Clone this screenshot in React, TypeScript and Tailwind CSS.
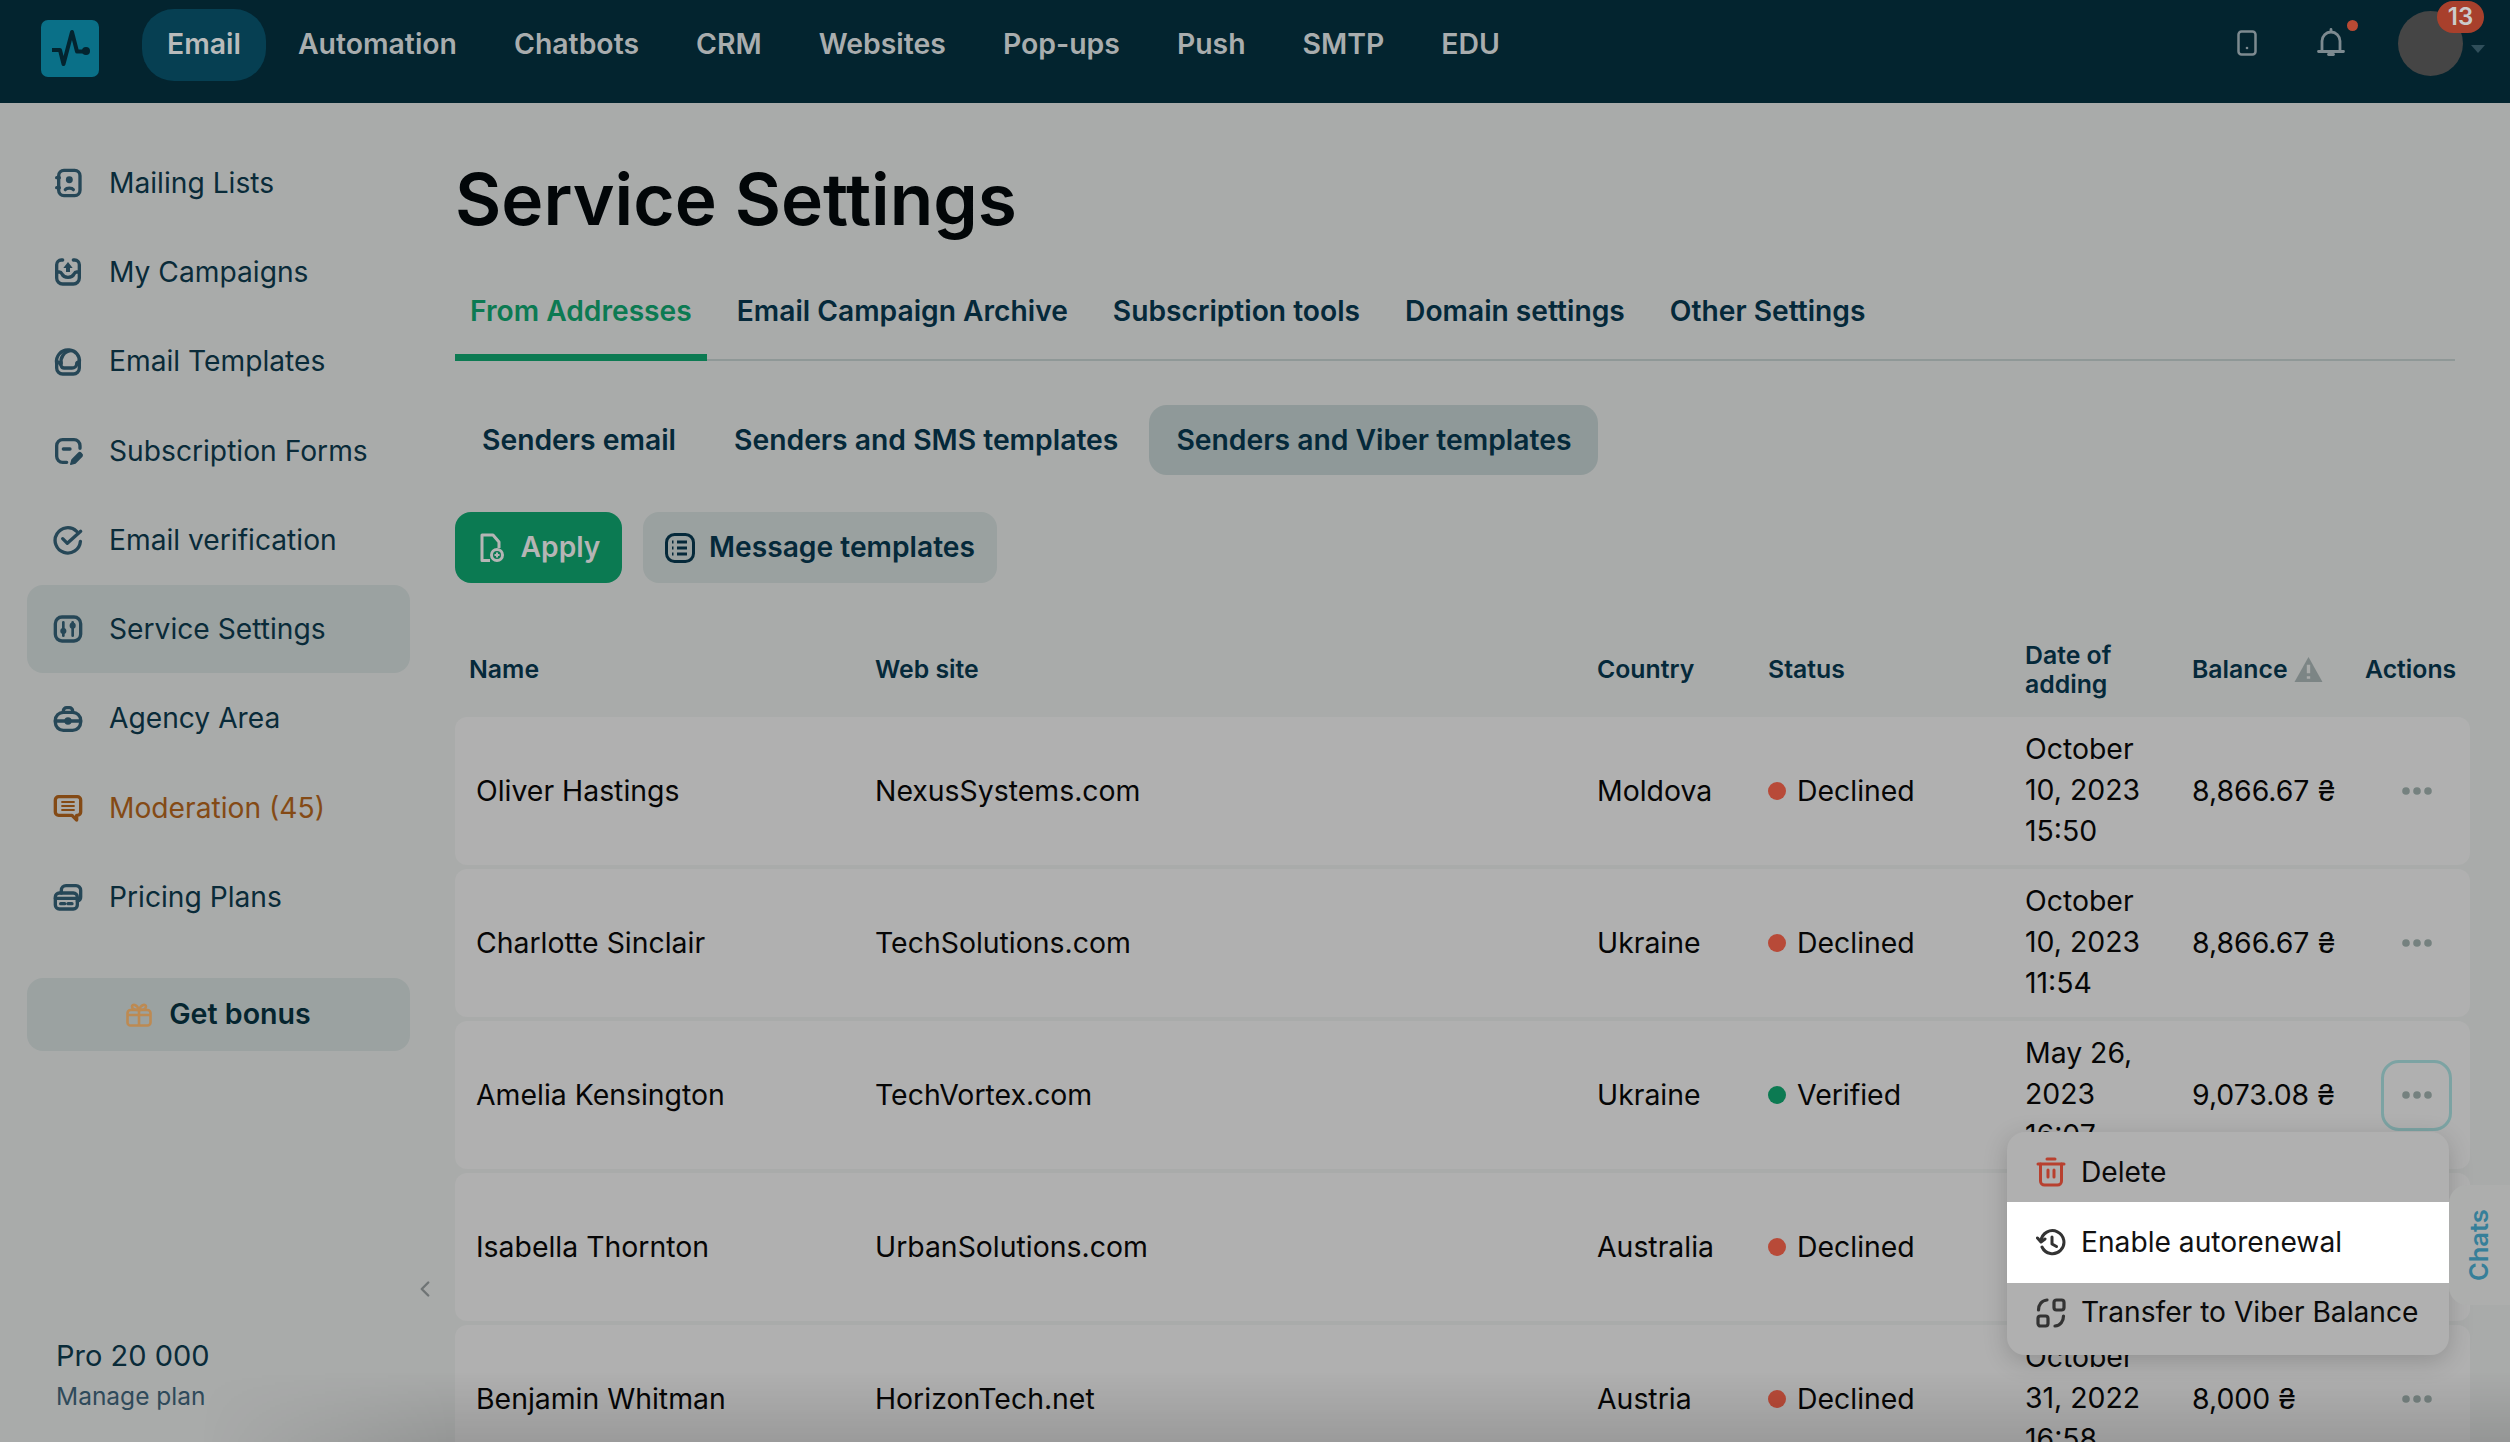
import React from "react";
import { ChevronLeft } from "lucide-react";

const font = { fontFamily: '"Inter", "Noto Sans", sans-serif' };

const navItems = ["Automation", "Chatbots", "CRM", "Websites", "Pop-ups", "Push", "SMTP", "EDU"];

// --- sidebar icons, all on a 24 box ---
const Ico = ({ children }: { children: React.ReactNode }) => (
  <svg viewBox="0 0 24 24" fill="none" stroke="currentColor" strokeWidth="2.5" strokeLinecap="round" strokeLinejoin="round" className="w-[32px] h-[32px]">
    {children}
  </svg>
);

const sideItems: { label: string; icon: React.ReactNode; active?: boolean; warn?: boolean }[] = [
  {
    label: "Mailing Lists",
    icon: (
      <Ico>
        <rect x="5" y="2.5" width="16" height="19" rx="4" />
        <circle cx="13" cy="9.5" r="2.600" fill="currentColor" stroke="none" />
        <path d="M10 17c1-1.500 5-1.500 6 0" />
        <path d="M3.500 8h2M3.500 15.500h2" />
      </Ico>
    ),
  },
  {
    label: "My Campaigns",
    icon: (
      <Ico>
        <path d="M8 3H7a3.500 3.500 0 0 0-3.500 3.500v10A4.500 4.500 0 0 0 8 21h8a4.500 4.500 0 0 0 4.500-4.500v-10A3.500 3.500 0 0 0 17 3h-1" />
        <path d="M3.500 12h2c1 0 1.500.5 2 1.500.7 1.500 2.500 2.500 4.500 2.500s3.800-1 4.500-2.500c.5-1 1-1.500 2-1.500h2" />
        <path d="M12 4.500 15.500 9H13.500v3h-3V9H8.500z" fill="currentColor" stroke="none" />
      </Ico>
    ),
  },
  {
    label: "Email Templates",
    icon: (
      <Ico>
        <path d="M3.500 13A8.500 8.500 0 0 1 12 3h1a8 8 0 0 1 7.500 9v4.500A4.500 4.500 0 0 1 16 21H8a4.500 4.500 0 0 1-4.500-4.500z" />
        <path d="M3.500 12c2 0 3 1 3.500 3 .3 1 1 1.500 2 1.500h6c2 0 3.500-1.500 3.500-3 0-1 1-1.500 2-1.500" />
        <path d="M7 13C6 9 9 4 14 3.500" />
      </Ico>
    ),
  },
  {
    label: "Subscription Forms",
    icon: (
      <Ico>
        <path d="M11 20.500H8A4.500 4.500 0 0 1 3.500 16V8A4.500 4.500 0 0 1 8 3.500h8.500A4.500 4.500 0 0 1 21 8v2" />
        <path d="M8.500 10.500h5" />
        <path d="M14 22l1-3.500 5-5c1-1 3.500 1 2.500 2.500l-5 5z" fill="currentColor" strokeWidth="1" />
      </Ico>
    ),
  },
  {
    label: "Email verification",
    icon: (
      <Ico>
        <path d="M18.500 5.500A9.500 9.500 0 1 0 21.300 13" />
        <path d="M8 11l3.500 3.500L21.500 5.500" />
      </Ico>
    ),
  },
  {
    label: "Service Settings",
    active: true,
    icon: (
      <Ico>
        <rect x="2.500" y="3" width="19" height="18" rx="5" />
        <path d="M8.500 7v10M15.500 7v10" strokeWidth="2" />
        <circle cx="8.500" cy="13.500" r="2.300" fill="currentColor" stroke="none" />
        <circle cx="15.500" cy="9.500" r="2.300" fill="currentColor" stroke="none" />
      </Ico>
    ),
  },
  {
    label: "Agency Area",
    icon: (
      <Ico>
        <rect x="2.500" y="7" width="19" height="13.500" rx="6" />
        <path d="M8.500 7V6a2.500 2.500 0 0 1 2.500-2.500h2A2.500 2.500 0 0 1 15.500 6v1" />
        <path d="M2.500 13.500h19" />
        <circle cx="12" cy="13.500" r="1.500" fill="currentColor" />
      </Ico>
    ),
  },
  {
    label: "Moderation (45)",
    warn: true,
    icon: (
      <Ico>
        <path d="M5 3.500h14A2.500 2.500 0 0 1 21.500 6v9a2.500 2.500 0 0 1-2.500 2.500h-.5V21L15 17.500H5A2.500 2.500 0 0 1 2.500 15V6A2.500 2.500 0 0 1 5 3.500z" />
        <path d="M7 7.500h10M7 10.500h10M7 13.500h10" strokeWidth="1.500" strokeLinecap="butt" />
      </Ico>
    ),
  },
  {
    label: "Pricing Plans",
    icon: (
      <Ico>
        <rect x="2.500" y="9" width="16.500" height="12" rx="3" />
        <path d="M7 9V7a3.500 3.500 0 0 1 3.500-3.500H18A3.500 3.500 0 0 1 21.500 7v5a3 3 0 0 1-2.500 3" />
        <path d="M2.500 13h16.500M6.500 17h3M12 17h3" />
      </Ico>
    ),
  },
];

const rows: { name: string; site: string; country: string; ok: boolean; date: string[]; bal: string; open?: boolean; covered?: boolean }[] = [
  { name: "Oliver Hastings", site: "NexusSystems.com", country: "Moldova", ok: false, date: ["October", "10, 2023", "15:50"], bal: "8,866.67 ₴" },
  { name: "Charlotte Sinclair", site: "TechSolutions.com", country: "Ukraine", ok: false, date: ["October", "10, 2023", "11:54"], bal: "8,866.67 ₴" },
  { name: "Amelia Kensington", site: "TechVortex.com", country: "Ukraine", ok: true, date: ["May 26,", "2023", "16:07"], bal: "9,073.08 ₴", open: true },
  // the open menu hides the date, balance and actions of this one
  { name: "Isabella Thornton", site: "UrbanSolutions.com", country: "Australia", ok: false, date: [], bal: "", covered: true },
  { name: "Benjamin Whitman", site: "HorizonTech.net", country: "Austria", ok: false, date: ["October", "31, 2022", "16:58"], bal: "8,000 ₴" },
];

const Header = () => (
  <header className="h-[103px] shrink-0 bg-[#03242f] flex items-center pl-[41px] pr-[25px]">
    <div className="w-[58px] h-[57px] rounded-[7px] bg-[#0a7088] flex items-center justify-center mt-[-7px]">
      <svg viewBox="0 0 58 57" className="w-[58px] h-[57px]" fill="none" stroke="#03242f" strokeWidth="4" strokeLinejoin="round">
        <path d="M11 30h8l3.500 14L31 12l5 19.500h8" />
        <circle cx="45" cy="31" r="4" fill="#03242f" stroke="none" />
      </svg>
    </div>
    <nav className="flex items-center ml-[43px] mt-[-14px] gap-[7px] text-[28.4px] font-semibold text-[#a9adae]">
      <a className="h-[72px] rounded-[32px] bg-[#063f52] px-[25px] flex items-center text-[#b9bbbb]">Email</a>
      {navItems.map((n) => (
        <a key={n} className="px-[25px] flex items-center">{n}</a>
      ))}
    </nav>
    <div className="ml-auto flex items-center relative h-full">
      <svg viewBox="0 0 20 26" className="w-[20px] h-[26px] mt-[-18px] mr-[60px]" fill="none" stroke="#7d8a90" strokeWidth="2.500">
        <rect x="1.500" y="1.500" width="17" height="23" rx="3" />
        <circle cx="10" cy="18" r="1.300" fill="#7d8a90" stroke="none" />
      </svg>
      <div className="relative mr-[53px] mt-[-18px]">
        <svg viewBox="0 0 28 29" className="w-[28px] h-[29px]" fill="none" stroke="#7d8a90" strokeWidth="2.800" strokeLinecap="round" strokeLinejoin="round">
          <path d="M5 23V13a9 9 0 0 1 18 0v10" />
          <path d="M1.500 23.500h25M14 1.500v2" />
          <path d="M11.500 26.500h5" />
        </svg>
        <span className="absolute right-[-13px] top-[-8px] w-[11px] h-[11px] rounded-full bg-[#b84a34]" />
      </div>
      <div className="relative w-[65px] h-[65px] rounded-full bg-[#454545] mt-[-17px] mr-[8px]">
        <span className="absolute left-[39px] top-[-10px] w-[47px] h-[32px] rounded-full bg-[#a8402c] text-[#cbcbcb] text-[24px] font-semibold flex items-center justify-center">13</span>
      </div>
      <svg viewBox="0 0 14 8" className="w-[14px] h-[8px] mt-[-6px]"><path d="M0 0h14L7 8z" fill="#2f4e5a" /></svg>
    </div>
  </header>
);

const Sidebar = () => (
  <aside className="w-[455px] shrink-0 pl-[27px] pr-[45px] pt-[36px] flex flex-col relative">
    <div className="flex flex-col gap-[1.250px]">
      {sideItems.map((s) => (
        <a
          key={s.label}
          className={
            "h-[88px] rounded-[16px] flex items-center pl-[25px] gap-[25px] text-[28.2px] " +
            (s.active ? "bg-[#9ba2a1] " : "") +
            (s.warn ? "text-[#844a15]" : "text-[#0a2b39]")
          }
        >
          <span className={s.warn ? "text-[#844a15]" : "text-[#264757]"}>{s.icon}</span>
          {s.label}
        </a>
      ))}
    </div>
    <button className="mt-[37px] h-[73px] rounded-[16px] bg-[#9ba2a1] flex items-center justify-center gap-[17px] text-[28.6px] font-semibold text-[#05252f]">
      <svg viewBox="0 0 26 24" className="w-[26px] h-[24px]" fill="none" stroke="#bd8a52" strokeWidth="2.600" strokeLinejoin="round">
        <rect x="1.500" y="7" width="23" height="15.500" rx="3" />
        <path d="M13 7v15.500M1.500 12h23" />
        <path d="M13 7C9 7 6 6 6 3.500S11 1 13 7c2-6 7-6 7-3.500S17 7 13 7z" />
      </svg>
      Get bonus
    </button>
    <ChevronLeft className="absolute left-[412px] top-[1173px] w-[26px] h-[26px] text-[#6f7475]" strokeWidth={2.200} />
    <div className="absolute left-[56px] top-[1233px]">
      <div className="text-[29px] leading-[40px] text-[#0a2b39]">Pro 20 000</div>
      <div className="text-[24.5px] leading-[40px] text-[#2f4a5a]">Manage plan</div>
    </div>
  </aside>
);

const Dots = () => (
  <svg viewBox="0 0 30 8" className="w-[30px] h-[8px]" fill="#75817f">
    <circle cx="4" cy="4" r="3.800" />
    <circle cx="15" cy="4" r="3.800" />
    <circle cx="26" cy="4" r="3.800" />
  </svg>
);

const Table = () => (
  <div className="mt-[37px]">
    <div className="h-[97px] pt-[2px] grid grid-cols-[420px_722px_171px_257px_167px_173px_1fr] items-center text-[24.800px] font-semibold leading-[29px] text-[#05293a]">
      <div className="pl-[14px]">Name</div>
      <div>Web site</div>
      <div>Country</div>
      <div>Status</div>
      <div>
        Date of
        <br />
        adding
      </div>
      <div className="flex items-center gap-[6px]">
        Balance
        <svg viewBox="0 0 30 28" className="w-[29px] h-[27px]">
          <path d="M15 1 29.500 27H.5z" fill="#7c8585" />
          <path d="M15 9v9M15 21v2.500" stroke="#a9abaa" strokeWidth="3.500" />
        </svg>
      </div>
      <div>Actions</div>
    </div>
    <div className="flex flex-col gap-[4px]">
      {rows.map((r) => (
        <div key={r.name} className="h-[148px] rounded-[12px] bg-[#b0b0b0] grid grid-cols-[420px_722px_171px_257px_167px_173px_1fr] items-center text-[28.4px] text-[#060606]">
          <div className="pl-[21px]">{r.name}</div>
          <div>{r.site}</div>
          <div>{r.country}</div>
          <div className="flex items-center gap-[11px]">
            <span className={"w-[18px] h-[18px] rounded-full " + (r.ok ? "bg-[#0c7a52]" : "bg-[#b84a38]")} />
            {r.ok ? "Verified" : "Declined"}
          </div>
          <div className="leading-[41px] mt-[-3px]">
            {r.date.map((d) => (
              <div key={d}>{d}</div>
            ))}
          </div>
          <div>{r.bal}</div>
          <div className="pl-[16px]">
            {!r.covered && (
              <div className={"w-[71px] h-[71px] rounded-[18px] flex items-center justify-center " + (r.open ? "border-[3px] border-[#7ca3a3]" : "")}>
                <Dots />
              </div>
            )}
          </div>
        </div>
      ))}
    </div>
  </div>
);

const Menu = () => (
  <div className="absolute left-[2007px] top-[1132px] w-[442px] h-[223px] rounded-[18px] bg-[#b0b0b0] shadow-[0_6px_24px_rgba(0,0,0,0.18)] text-[28.2px] text-[#0a0a0a] pt-[10px]">
    <div className="h-[60px] flex items-center pl-[29px] gap-[15px]">
      <svg viewBox="0 0 30 30" className="w-[30px] h-[30px]" fill="none" stroke="#b8402f" strokeWidth="3" strokeLinecap="round" strokeLinejoin="round">
        <path d="M2 7h26M11 2h8" />
        <path d="M4.500 7v17a4 4 0 0 0 4 4h13a4 4 0 0 0 4-4V7" />
        <path d="M12 13v7M18 13v7" />
      </svg>
      Delete
    </div>
    <div className="h-[81px] w-[446px] bg-white flex items-center pl-[29px] gap-[15px] text-[#111]">
      <svg viewBox="0 0 30 30" className="w-[30px] h-[30px]" fill="none" stroke="#333" strokeWidth="3" strokeLinecap="round" strokeLinejoin="round">
        <path d="M6 19a11.500 11.500 0 1 0-1-6" />
        <path d="M1.500 10 5 14l4-3" />
        <path d="M16 9v7l4.500 2.500" />
      </svg>
      Enable autorenewal
    </div>
    <div className="h-[59px] flex items-center pl-[29px] gap-[15px]">
      <svg viewBox="0 0 30 30" className="w-[30px] h-[30px]" fill="none" stroke="#333" strokeWidth="3.200" strokeLinecap="round" strokeLinejoin="round">
        <rect x="18" y="2" width="10" height="10" rx="2.500" />
        <rect x="2" y="18" width="10" height="10" rx="2.500" />
        <path d="M2.500 12c0-5 3-9.500 8.500-10M27.500 18c0 5-3 9.500-8.500 10" />
      </svg>
      Transfer to Viber Balance
    </div>
  </div>
);

export default function App() {
  return (
    <div style={font} className="relative w-[2510px] h-[1442px] overflow-hidden bg-[#a9abaa] flex flex-col">
      <Header />
      <div className="flex flex-1 min-h-0">
        <Sidebar />
        <main className="flex-1 min-w-0 pr-[40px] pt-[56px]">
          <h1 className="text-[71.200px] leading-[80px] font-semibold text-[#020608]">Service Settings</h1>

          {/* tabs */}
          <div className="mt-[38px] mr-[15px] h-[84px] flex gap-[15px] border-b-[2px] border-[#8f9897] text-[28.2px] font-semibold text-[#05293a]">
            <a className="px-[15px] h-[84px] flex items-center border-b-[7px] border-[#0c7a52] text-[#0c7a52] pb-[9px]">From Addresses</a>
            {["Email Campaign Archive", "Subscription tools", "Domain settings", "Other Settings"].map((t) => (
              <a key={t} className="px-[15px] h-[84px] flex items-center pb-[16px]">{t}</a>
            ))}
          </div>

          <div className="mt-[44px] flex gap-[4px] text-[28.3px] font-semibold text-[#05293a]">
            <a className="h-[70px] px-[27px] flex items-center">Senders email</a>
            <a className="h-[70px] px-[27px] flex items-center">Senders and SMS templates</a>
            <a className="h-[70px] px-[27px] flex items-center rounded-[18px] bg-[#8f9999]">Senders and Viber templates</a>
          </div>

          <div className="mt-[37px] flex gap-[21px] text-[28.2px] font-semibold">
            <button className="h-[71px] w-[167px] pl-[3px] rounded-[16px] bg-[#0b7a52] text-[#b5b5b5] flex items-center justify-center gap-[17px]">
              <svg viewBox="0 0 24 30" className="w-[24px] h-[30px]" fill="none" stroke="#b5b5b5" strokeWidth="3" strokeLinejoin="round">
                <path d="M10 27.500H2V2h11l6 7v6" />
                <circle cx="17" cy="22" r="5.500" />
                <path d="M17 19.500v5M14.500 22h5" strokeWidth="2" />
              </svg>
              Apply
            </button>
            <button className="h-[71px] w-[354px] rounded-[16px] bg-[#9aa1a0] text-[#05293a] flex items-center justify-center gap-[14px]">
              <svg viewBox="0 0 30 30" className="w-[30px] h-[30px]" fill="none" stroke="#05293a" strokeWidth="3">
                <rect x="1.500" y="1.500" width="27" height="27" rx="8" />
                <path d="M12 9h10M12 15h10M12 21h10M7 9h1.500M7 15h1.500M7 21h1.500" />
              </svg>
              Message templates
            </button>
          </div>

          <Table />
        </main>
      </div>

      <Menu />

      {/* chats tab */}
      <div className="absolute right-0 top-[1185px] w-[61px] h-[120px] pr-[2px] rounded-l-[18px] bg-[#adaead] flex items-center justify-center">
        <span className="-rotate-90 text-[25.5px] font-semibold text-[#367f99]">Chats</span>
      </div>

      {/* the bottom shade in the shot */}
      <div className="absolute left-[200px] right-0 bottom-0 h-[70px] bg-gradient-to-t from-black/12 to-transparent pointer-events-none [mask-image:linear-gradient(to_right,transparent,black_250px)]" />
    </div>
  );
}
